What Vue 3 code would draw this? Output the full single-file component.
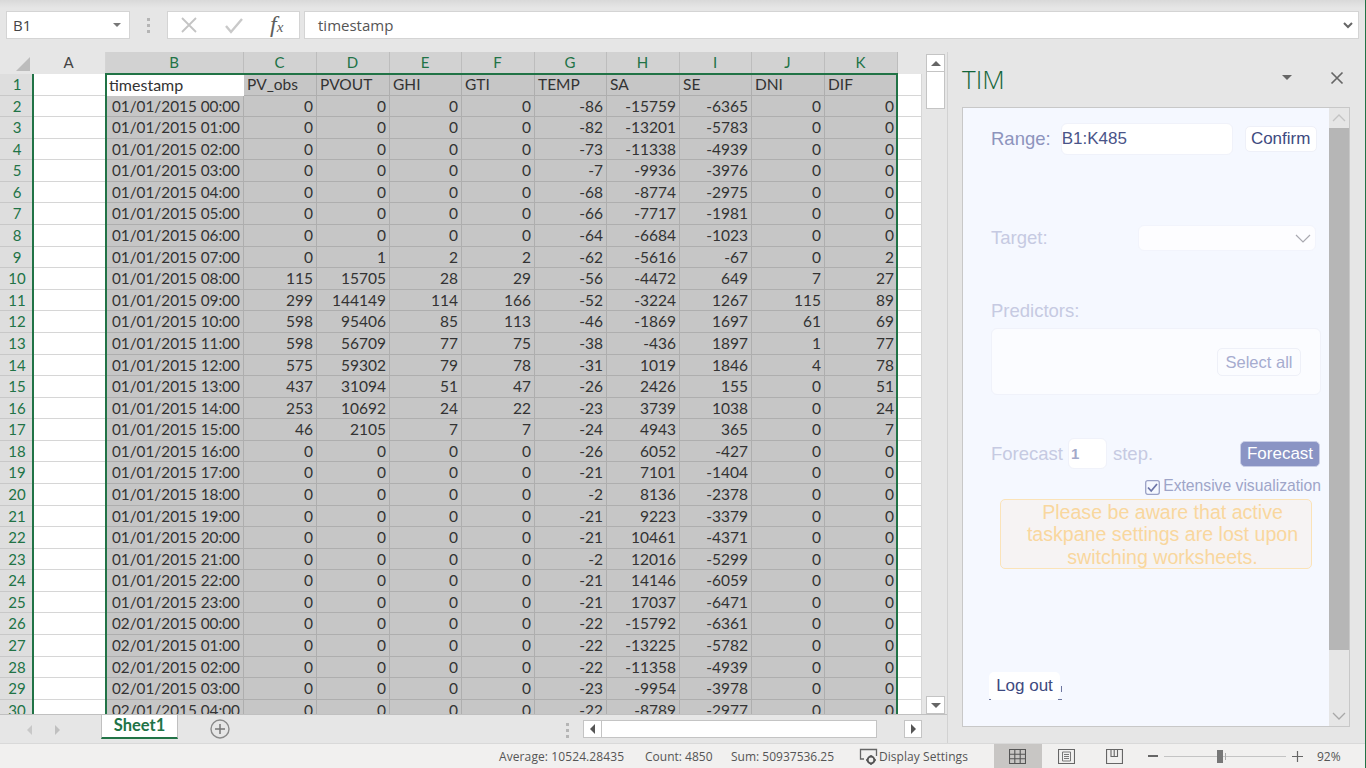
<script setup>
const colLetters = ['A','B','C','D','E','F','G','H','I','J','K']
const titles = ['timestamp','PV_obs','PVOUT','GHI','GTI','TEMP','SA','SE','DNI','DIF']
const raw = `01/01/2015 00:00,0,0,0,0,-86,-15759,-6365,0,0
01/01/2015 01:00,0,0,0,0,-82,-13201,-5783,0,0
01/01/2015 02:00,0,0,0,0,-73,-11338,-4939,0,0
01/01/2015 03:00,0,0,0,0,-7,-9936,-3976,0,0
01/01/2015 04:00,0,0,0,0,-68,-8774,-2975,0,0
01/01/2015 05:00,0,0,0,0,-66,-7717,-1981,0,0
01/01/2015 06:00,0,0,0,0,-64,-6684,-1023,0,0
01/01/2015 07:00,0,1,2,2,-62,-5616,-67,0,2
01/01/2015 08:00,115,15705,28,29,-56,-4472,649,7,27
01/01/2015 09:00,299,144149,114,166,-52,-3224,1267,115,89
01/01/2015 10:00,598,95406,85,113,-46,-1869,1697,61,69
01/01/2015 11:00,598,56709,77,75,-38,-436,1897,1,77
01/01/2015 12:00,575,59302,79,78,-31,1019,1846,4,78
01/01/2015 13:00,437,31094,51,47,-26,2426,155,0,51
01/01/2015 14:00,253,10692,24,22,-23,3739,1038,0,24
01/01/2015 15:00,46,2105,7,7,-24,4943,365,0,7
01/01/2015 16:00,0,0,0,0,-26,6052,-427,0,0
01/01/2015 17:00,0,0,0,0,-21,7101,-1404,0,0
01/01/2015 18:00,0,0,0,0,-2,8136,-2378,0,0
01/01/2015 19:00,0,0,0,0,-21,9223,-3379,0,0
01/01/2015 20:00,0,0,0,0,-21,10461,-4371,0,0
01/01/2015 21:00,0,0,0,0,-2,12016,-5299,0,0
01/01/2015 22:00,0,0,0,0,-21,14146,-6059,0,0
01/01/2015 23:00,0,0,0,0,-21,17037,-6471,0,0
02/01/2015 00:00,0,0,0,0,-22,-15792,-6361,0,0
02/01/2015 01:00,0,0,0,0,-22,-13225,-5782,0,0
02/01/2015 02:00,0,0,0,0,-22,-11358,-4939,0,0
02/01/2015 03:00,0,0,0,0,-23,-9954,-3978,0,0
02/01/2015 04:00,0,0,0,0,-22,-8789,-2977,0,0`
const rows = raw.split('\n').map(l => l.split(','))
</script>

<template>
  <div class="app">
    <div class="formula">
      <div class="namebox"><span>B1</span><i class="tri-down small"></i></div>
      <div class="dots"><b></b><b></b><b></b></div>
      <div class="fxbox">
        <svg width="18" height="18" viewBox="0 0 18 18"><path d="M2 2 L16 16 M16 2 L2 16" stroke="#c4c4c4" stroke-width="1.8" fill="none"/></svg>
        <svg width="20" height="18" viewBox="0 0 20 18"><path d="M2 10 L7 16 L18 3" stroke="#c9c9c9" stroke-width="2.4" fill="none"/></svg>
        <span class="fx">f<small>x</small></span>
      </div>
      <div class="finput"><span>timestamp</span><svg width="10" height="7" viewBox="0 0 10 7"><path d="M1 1 L5 5 L9 1" stroke="#666" stroke-width="2" fill="none"/></svg></div>
    </div>

    <div class="main">
      <div class="left">
        <div class="sheetrow">
          <div class="sheet">
            <div class="grid">
              <div class="corner"><i></i></div>
              <div v-for="c in colLetters" :key="c" class="colhead" :class="{ sel: c !== 'A' }">{{ c }}</div>
              <div class="colhead blank"></div>

              <div class="rowhead">1</div>
              <div class="c white"></div>
              <div v-for="(t, i) in titles" :key="t" class="c txt" :class="i === 0 ? 'active' : 'selc'">{{ t }}</div>
              <div class="c white"></div>

              <template v-for="(r, ri) in rows" :key="ri">
                <div class="rowhead">{{ ri + 2 }}</div>
                <div class="c white"></div>
                <div v-for="(v, vi) in r" :key="vi" class="c selc num" :class="{ date: vi === 0 }">{{ v }}</div>
                <div class="c white"></div>
              </template>
            </div>
            <div class="selection"></div>
            <div class="gutter"></div>
          </div>
          <div class="vscroll">
            <div class="sbtn"><i class="tri-up"></i></div>
            <div class="vthumb"></div>
            <div class="vtrack"></div>
            <div class="sbtn"><i class="tri-down"></i></div>
          </div>
        </div>
        <div class="tabs">
          <div class="nav"><i class="tri-left pale"></i><i class="tri-right pale"></i></div>
          <div class="tab">Sheet1</div>
          <svg class="addtab" width="20" height="20" viewBox="0 0 20 20"><circle cx="10" cy="10" r="9" fill="none" stroke="#8a8a8a" stroke-width="1.4"/><path d="M5 10 H15 M10 5 V15" stroke="#777" stroke-width="1.5"/></svg>
          <div class="dots tabdots"><b></b><b></b><b></b></div>
          <div class="hscroll">
            <div class="hbtn"><i class="tri-left"></i></div>
            <div class="hthumb"></div>
            <div class="htrack"></div>
            <div class="hbtn"><i class="tri-right"></i></div>
          </div>
        </div>
      </div>

      <aside class="pane">
        <div class="panehead">
          <span class="tim">TIM</span>
          <i class="tri-down panetri"></i>
          <svg class="paneclose" width="14" height="14" viewBox="0 0 14 14"><path d="M1.5 1.5 L12.5 12.5 M12.5 1.5 L1.5 12.5" stroke="#666" stroke-width="1.7" fill="none"/></svg>
        </div>
        <div class="panebox">
          <div class="content">
            <div class="r-range">
              <span class="lbl strong">Range:</span>
              <div class="inp range">B1:K485</div>
              <div class="btn confirm">Confirm</div>
            </div>
            <div class="r-target">
              <span class="lbl">Target:</span>
              <div class="select"><svg width="16" height="9" viewBox="0 0 16 9"><path d="M1 1 L8 8 L15 1" stroke="#a9a9b0" stroke-width="1.2" fill="none"/></svg></div>
            </div>
            <div class="lbl pred">Predictors:</div>
            <div class="predbox"><div class="btn selall">Select all</div></div>
            <div class="r-forecast">
              <span class="lbl">Forecast</span>
              <div class="inp step">1</div>
              <span class="lbl steptxt">step.</span>
              <div class="btn fcbtn">Forecast</div>
            </div>
            <div class="r-check">
              <svg width="15" height="15" viewBox="0 0 15 15"><rect x="0.7" y="0.7" width="13.6" height="13.6" rx="2" fill="#f5f8ff" stroke="#9aa1c6" stroke-width="1.3"/><path d="M3 7.5 L6.2 11 L12 4" stroke="#6c75a8" stroke-width="1.8" fill="none"/></svg>
              <span>Extensive visualization</span>
            </div>
            <div class="alert">Please be aware that active taskpane settings are lost upon switching worksheets.</div>
            <div class="logout"><span>Log out</span><i class="lo-a"></i><i class="lo-b"></i><i class="lo-c"></i></div>
          </div>
          <div class="panescroll">
            <div class="psbtn"><svg width="14" height="8" viewBox="0 0 14 8"><path d="M1 7 L7 1 L13 7" stroke="#c4c4c4" stroke-width="1.3" fill="none"/></svg></div>
            <div class="psthumb"></div>
            <div class="pstrack"></div>
            <div class="psbtn"><svg width="14" height="8" viewBox="0 0 14 8"><path d="M1 1 L7 7 L13 1" stroke="#a8a8a8" stroke-width="1.3" fill="none"/></svg></div>
          </div>
        </div>
      </aside>
    </div>

    <div class="status">
      <span class="s-avg">Average: 10524.28435</span>
      <span class="s-count">Count: 4850</span>
      <span class="s-sum">Sum: 50937536.25</span>
      <svg class="s-disp" width="19" height="17" viewBox="0 0 19 17"><path d="M5 11 H1.5 V1.5 H17.5 V8" fill="none" stroke="#666" stroke-width="1.3"/><circle cx="12" cy="12" r="3.4" fill="none" stroke="#555" stroke-width="2"/><path d="M12 7 V9 M12 15 V17 M7 12 H9 M15 12 H17" stroke="#555" stroke-width="1.4"/></svg>
      <span class="s-dtext">Display Settings</span>
      <div class="view on">
        <svg width="17" height="15" viewBox="0 0 17 15"><path d="M0.5 0.5 H16.5 V14.5 H0.5 Z M5.8 0.5 V14.5 M11.2 0.5 V14.5 M0.5 5.2 H16.5 M0.5 9.8 H16.5" fill="none" stroke="#555" stroke-width="1.1"/></svg>
      </div>
      <div class="view">
        <svg width="17" height="15" viewBox="0 0 17 15"><path d="M0.5 0.5 H16.5 V14.5 H0.5 Z" fill="none" stroke="#666" stroke-width="1.1"/><path d="M4.5 3 H12.5 V12 H4.5 Z M6 5.5 H11 M6 7.5 H11 M6 9.5 H11" fill="none" stroke="#777" stroke-width="1"/></svg>
      </div>
      <div class="view">
        <svg width="17" height="15" viewBox="0 0 17 15"><path d="M0.5 0.5 H16.5 V14.5 H0.5 Z" fill="none" stroke="#666" stroke-width="1.2"/><path d="M5 0.5 V7.5 H11.5 V0.5 M8.2 0.5 V7.5" fill="none" stroke="#666" stroke-width="1.1"/></svg>
      </div>
      <div class="zoom">
        <span class="z-minus"></span>
        <div class="z-track"><i class="z-tick"></i><i class="z-thumb"></i></div>
        <svg width="11" height="11" viewBox="0 0 11 11"><path d="M0 5.5 H11 M5.5 0 V11" stroke="#666" stroke-width="1.2"/></svg>
        <span class="z-pct">92%</span>
      </div>
    </div>
    <div class="edge"></div>
  </div>
</template>

<style scoped>
.app { position: relative; width: 1366px; height: 768px; overflow: hidden; display: flex; flex-direction: column; background: #e6e6e6; font-family: Lato, "Open Sans", sans-serif; color: #333; }
.edge { position: absolute; top: 0; right: 0; width: 1px; height: 768px; background: #217346; }

.tri-down, .tri-up, .tri-left, .tri-right { display: block; width: 0; height: 0; border-style: solid; border-color: transparent; }
.tri-down { border-width: 5px 5px 0; border-top-color: #666; }
.tri-down.small { border-width: 4px 4px 0; border-top-color: #777; }
.tri-up { border-width: 0 5px 5px; border-bottom-color: #666; }
.tri-left { border-width: 5px 5px 5px 0; border-right-color: #555; }
.tri-right { border-width: 5px 0 5px 5px; border-left-color: #555; }
.tri-left.pale { border-right-color: #c8c8c8; border-width: 5px 5px 5px 0; }
.tri-right.pale { border-left-color: #c0c0c0; }

.formula { height: 52px; flex: none; display: flex; align-items: flex-start; padding: 11px 6px 0; box-sizing: border-box; background: linear-gradient(#d9d9d9, #e6e6e6 8px); }
.namebox { width: 124px; height: 28px; box-sizing: border-box; background: #fff; border: 1px solid #d4d4d4; display: flex; align-items: center; justify-content: space-between; padding: 0 8px 0 6px; font-family: "Open Sans", sans-serif; font-size: 15px; color: #444; }
.dots { display: flex; flex-direction: column; gap: 3px; }
.dots b { display: block; width: 3px; height: 3px; background: #b5b5b5; }
.formula > .dots { margin: 7px 17px 0 17px; }
.fxbox { width: 133px; height: 28px; box-sizing: border-box; background: #fff; border: 1px solid #d4d4d4; display: flex; align-items: center; padding: 0 10px 0 12px; justify-content: space-between; }
.fx { font-family: "Liberation Serif", serif; font-style: italic; font-size: 24px; color: #5e5e5e; width: 19px; line-height: 24px; }
.fx small { font-size: 15px; }
.finput { margin-left: 4px; width: 1055px; height: 28px; box-sizing: border-box; background: #fff; border: 1px solid #d4d4d4; display: flex; align-items: center; justify-content: space-between; padding: 0 5px 0 13px; font-family: "Open Sans", sans-serif; font-size: 15px; color: #555; }

.main { flex: 1; min-height: 0; display: flex; }
.left { width: 947px; flex: none; display: flex; flex-direction: column; border-right: 1px solid #d2d2d2; }
.sheetrow { height: 662px; flex: none; display: flex; }
.sheet { position: relative; width: 922px; height: 662px; overflow: hidden; }
.grid { display: grid; grid-template-columns: 33px 73px 138px 73px 73px 72px 73px 72px 73px 72px 73px 73px 24px; grid-template-rows: 22px; grid-auto-rows: 21.58px; font-size: 15.5px; color: #333; }
.corner { background: #e6e6e6; position: relative; }
.corner i { position: absolute; right: 3px; bottom: 3px; width: 0; height: 0; border-style: solid; border-width: 0 0 14px 14px; border-color: transparent transparent #bcbcbc transparent; }
.colhead { background: #e6e6e6; text-align: center; line-height: 21px; font-size: 15px; color: #444; border-right: 1px solid #d4d4d4; box-sizing: border-box; padding-right: 1px; }
.colhead.sel { background: #d2d2d2; color: #217346; border-right-color: #bdbdbd; }
.colhead.blank { border: 0; }
.rowhead { background: #dedede; color: #217346; text-align: center; line-height: 21px; font-size: 15px; border-bottom: 1px solid #c8c8c8; box-sizing: border-box; padding-left: 1px; }
.c { box-sizing: border-box; overflow: hidden; white-space: nowrap; line-height: 21px; padding: 0 3px; }
.white { background: #fff; border-right: 1px solid #d6d6d6; border-bottom: 1px solid #d6d6d6; }
.selc { background: #c6c6c6; border-right: 1px solid #aeaeae; border-bottom: 1px solid #aeaeae; }
.active { background: #fff; font-size: 16px; }
.num { text-align: right; }
.date { font-size: 15.3px; }
.selection { position: absolute; left: 105px; top: 21px; width: 793px; height: 660px; box-sizing: border-box; border: 2px solid #217346; pointer-events: none; }
.gutter { position: absolute; left: 32px; top: 22px; width: 2px; height: 640px; background: #217346; }

.vscroll { width: 19px; margin-left: 4px; display: flex; flex-direction: column; padding-top: 2px; height: 662px; box-sizing: border-box; }
.sbtn { height: 18px; flex: none; background: #fff; border: 1px solid #c4c4c4; box-sizing: border-box; display: flex; align-items: center; justify-content: center; }
.vthumb { height: 37px; flex: none; background: #fff; border: 1px solid #c4c4c4; box-sizing: border-box; border-top: 0; }
.vtrack { flex: 1; }

.tabs { flex: 1; position: relative; display: flex; align-items: flex-start; border-top: 1px solid #c0c0c0; box-sizing: border-box; }
.nav { width: 101px; flex: none; display: flex; gap: 23px; padding: 10px 0 0 27px; box-sizing: border-box; }
.tab { width: 77px; flex: none; background: #fff; border-bottom: 2px solid #217346; border-left: 1px solid #c0c0c0; border-right: 1px solid #c0c0c0; text-align: center; line-height: 21px; color: #217346; font-weight: 700; font-size: 16.5px; box-sizing: border-box; height: 24px; }
.addtab { margin: 4px 0 0 32px; flex: none; }
.tabdots { margin: 8px 0 0 336px; flex: none; }
.hscroll { margin: 5px 0 0 14px; width: 339px; height: 18px; flex: none; display: flex; }
.hbtn { width: 19px; flex: none; background: #fff; border: 1px solid #c4c4c4; box-sizing: border-box; display: flex; align-items: center; justify-content: center; }
.hbtn:last-child { width: 18px; }
.hthumb { width: 275px; flex: none; background: #fff; border: 1px solid #c4c4c4; border-left: 0; box-sizing: border-box; }
.htrack { flex: 1; }

.pane { flex: 1; min-width: 0; padding-left: 14px; box-sizing: border-box; display: flex; flex-direction: column; }
.panehead { height: 55px; flex: none; display: flex; align-items: center; position: relative; }
.tim { font-family: "Open Sans", sans-serif; font-weight: 300; font-size: 26px; color: #12653a; margin-top: -1px; }
.panetri { margin-left: 277px; margin-top: -4px; }
.paneclose { margin-left: 38px; margin-top: -3px; }
.panebox { width: 388px; height: 620px; box-sizing: border-box; border: 1px solid #c8c8c8; background: #f5f8ff; display: flex; font-family: "Liberation Sans", sans-serif; }
.content { flex: 1; min-width: 0; box-sizing: content-box; padding-left: 28px; position: relative; }
.panescroll { width: 20px; flex: none; display: flex; flex-direction: column; background: #e6e6e6; }
.psbtn { height: 20px; flex: none; display: flex; align-items: center; justify-content: center; }
.psthumb { height: 522px; flex: none; background: #b6b6b6; }
.pstrack { flex: 1; }

.lbl { font-size: 18.5px; color: #c6cae2; }
.lbl.strong { color: #8d94bd; }
.inp { background: #fff; border: 1px solid #f0f2fa; border-radius: 6px; box-sizing: border-box; }
.btn { box-sizing: border-box; border-radius: 5px; background: #fff; border: 1px solid #eef0f8; display: flex; align-items: center; justify-content: center; font-size: 17px; color: #3e4a80; }
.r-range { display: flex; align-items: center; padding-top: 15px; height: 32px; box-sizing: content-box; }
.range { width: 172px; height: 32px; margin-left: 10px; line-height: 30px; padding-left: 0; font-size: 17px; color: #4a5488; }
.confirm { width: 72px; height: 26px; margin-left: 12px; }
.r-target { display: flex; align-items: center; margin-top: 70px; height: 26px; justify-content: space-between; width: 325px; }
.select { width: 178px; height: 26px; box-sizing: border-box; background: #fdfdff; border: 1px solid #f2f4fc; border-radius: 6px; display: flex; align-items: center; justify-content: flex-end; padding-right: 4px; }
.pred { margin-top: 49px; line-height: 22px; }
.predbox { width: 330px; height: 67px; margin-top: 6px; box-sizing: border-box; background: #fbfcff; border: 1px solid #f0f2fa; border-radius: 6px; display: flex; justify-content: flex-end; align-items: flex-start; padding: 19px 19px 0 0; }
.selall { width: 84px; height: 28px; background: #fbfcff; color: #a6accf; font-size: 16.5px; }
.r-forecast { display: flex; align-items: center; margin-top: 43px; height: 31px; width: 329px; }
.step { width: 39px; height: 31px; margin-left: 5px; line-height: 29px; padding-left: 2px; font-size: 15px; color: #a3a9ca; font-weight: 700; }
.steptxt { margin-left: 6px; }
.fcbtn { width: 80px; height: 26px; margin-left: auto; background: #8a94c4; border-color: #c9cee6; color: #fff; font-size: 17px; }
.r-check { display: flex; align-items: center; justify-content: flex-end; gap: 3px; width: 330px; margin-top: 7px; height: 20px; font-size: 15.7px; color: #9ea5c8; }
.r-check svg { margin-top: 2px; }
.alert { width: 312px; height: 70px; margin: 3px 0 0 9px; box-sizing: border-box; border: 1px solid #fbe3b8; border-radius: 5px; background: #f6f3f3; color: #f9d79e; font-size: 19.6px; line-height: 22.5px; text-align: center; padding: 0.5px 0 0 13px; }
.logout { position: relative; width: 71px; height: 28px; margin: 103px 0 0 -2px; background: #fff; border-radius: 5px; font-size: 17px; color: #3e4a80; display: flex; align-items: center; justify-content: center; }
.lo-a { position: absolute; left: 0; bottom: 0; width: 2px; height: 1px; background: #6d769f; }
.lo-b { position: absolute; right: -2px; bottom: 0; width: 4px; height: 1px; background: #6d769f; }
.lo-c { position: absolute; right: -2px; top: 14px; width: 1px; height: 6px; background: #6d769f; }

.status { height: 25px; flex: none; display: flex; align-items: center; background: #f1f0ef; border-top: 1px solid #d9d9d9; box-sizing: border-box; font-family: "Open Sans", sans-serif; font-size: 12px; color: #555; position: relative; }
.s-avg { margin-left: 499px; width: 146px; white-space: nowrap; letter-spacing: 0.1px; }
.s-count { width: 86px; white-space: nowrap; }
.s-sum { width: 128px; white-space: nowrap; }
.s-disp { flex: none; }
.s-dtext { margin-left: 1px; width: 115px; white-space: nowrap; letter-spacing: 0.05px; }
.view { width: 48px; height: 24px; flex: none; display: flex; align-items: center; justify-content: center; }
.view svg { margin-left: -1px; }
.view + .view svg { margin-left: 1px; }
.zoom { display: flex; align-items: center; margin-left: 10px; }
.view.on { background: #c8c6c4; }
.z-minus { display: block; width: 10px; height: 1.5px; background: #666; }
.z-track { position: relative; width: 122px; height: 1px; background: #c4c4c4; margin: 0 6px; }
.z-tick { position: absolute; left: 61px; top: -3px; width: 1px; height: 7px; background: #aaa; }
.z-thumb { position: absolute; left: 53px; top: -6px; width: 6px; height: 13px; background: #777; }
.z-pct { margin-left: 14px; font-size: 12px; }
</style>
